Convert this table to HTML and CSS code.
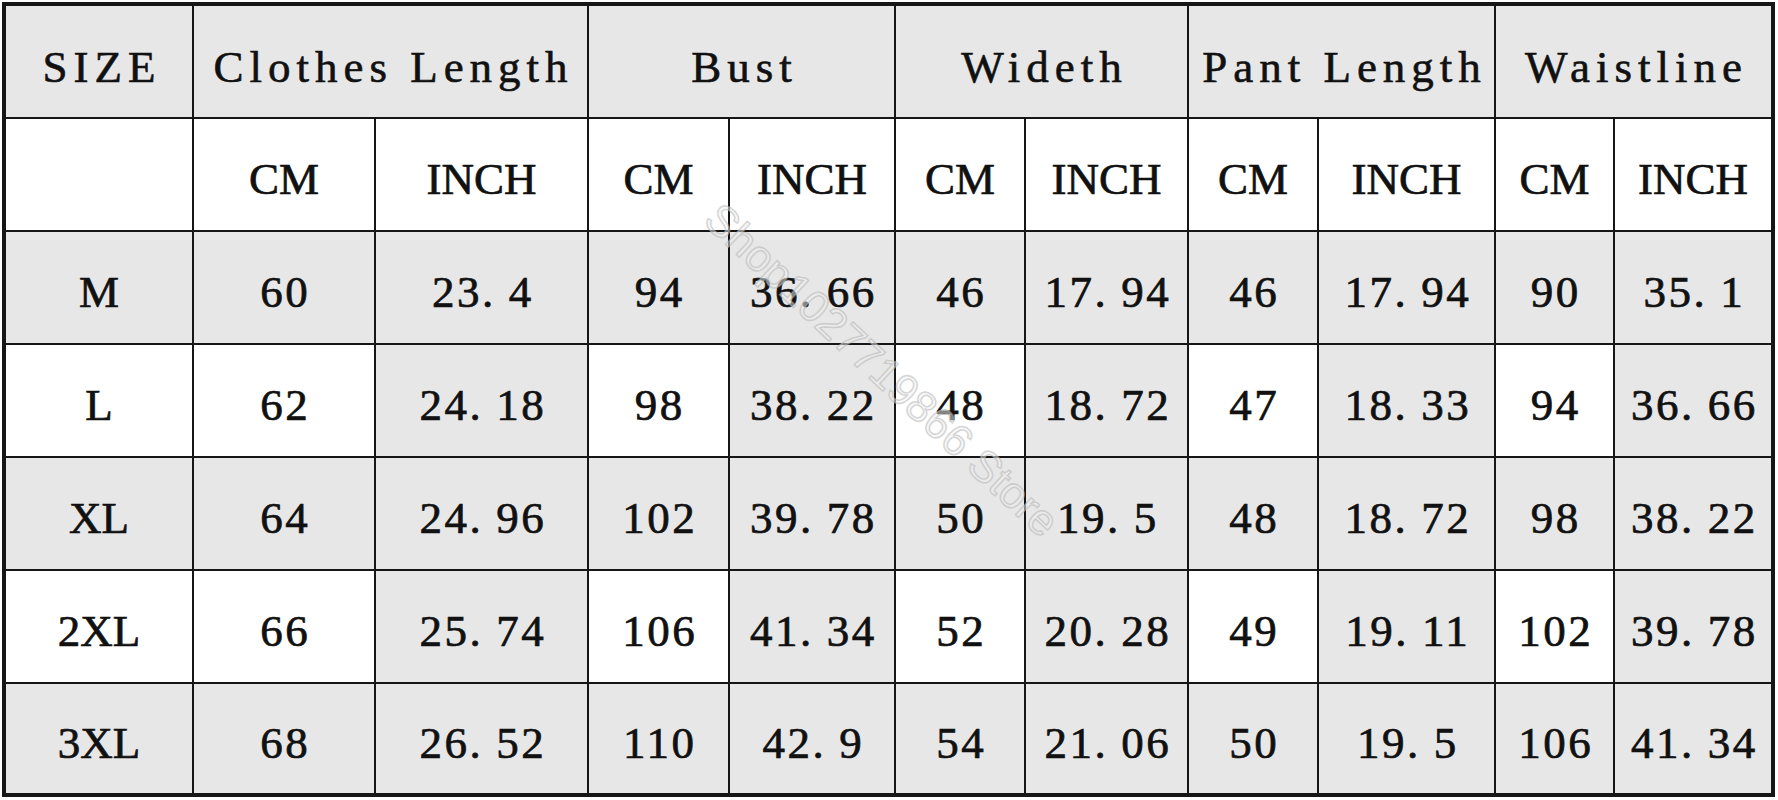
FILE: index.html
```html
<!DOCTYPE html>
<html lang="en">
<head>
<meta charset="utf-8">
<title>Size Chart</title>
<link rel="stylesheet" href="styles.css">
</head>
<body>
<div class="chart">
  <div class="grid">
    <div class="cell gray head">SIZE</div>
    <div class="cell gray head span2">Clothes Length</div>
    <div class="cell gray head span2">Bust</div>
    <div class="cell gray head span2">Wideth</div>
    <div class="cell gray head span2">Pant Length</div>
    <div class="cell gray head span2">Waistline</div>

    <div class="cell"></div>
    <div class="cell unit">CM</div><div class="cell unit">INCH</div>
    <div class="cell unit">CM</div><div class="cell unit">INCH</div>
    <div class="cell unit">CM</div><div class="cell unit">INCH</div>
    <div class="cell unit">CM</div><div class="cell unit">INCH</div>
    <div class="cell unit">CM</div><div class="cell unit">INCH</div>

    <div class="cell gray size">M</div>
    <div class="cell gray num">60</div><div class="cell gray num">23.<span class="frac">4</span></div>
    <div class="cell gray num">94</div><div class="cell gray num">36.<span class="frac">66</span></div>
    <div class="cell gray num">46</div><div class="cell gray num">17.<span class="frac">94</span></div>
    <div class="cell gray num">46</div><div class="cell gray num">17.<span class="frac">94</span></div>
    <div class="cell gray num">90</div><div class="cell gray num">35.<span class="frac">1</span></div>

    <div class="cell size">L</div>
    <div class="cell num">62</div><div class="cell gray num">24.<span class="frac">18</span></div>
    <div class="cell num">98</div><div class="cell gray num">38.<span class="frac">22</span></div>
    <div class="cell num">48</div><div class="cell gray num">18.<span class="frac">72</span></div>
    <div class="cell num">47</div><div class="cell gray num">18.<span class="frac">33</span></div>
    <div class="cell num">94</div><div class="cell gray num">36.<span class="frac">66</span></div>

    <div class="cell gray size">XL</div>
    <div class="cell gray num">64</div><div class="cell gray num">24.<span class="frac">96</span></div>
    <div class="cell gray num">102</div><div class="cell gray num">39.<span class="frac">78</span></div>
    <div class="cell gray num">50</div><div class="cell gray num">19.<span class="frac">5</span></div>
    <div class="cell gray num">48</div><div class="cell gray num">18.<span class="frac">72</span></div>
    <div class="cell gray num">98</div><div class="cell gray num">38.<span class="frac">22</span></div>

    <div class="cell size">2XL</div>
    <div class="cell num">66</div><div class="cell gray num">25.<span class="frac">74</span></div>
    <div class="cell num">106</div><div class="cell gray num">41.<span class="frac">34</span></div>
    <div class="cell num">52</div><div class="cell gray num">20.<span class="frac">28</span></div>
    <div class="cell num">49</div><div class="cell gray num">19.<span class="frac">11</span></div>
    <div class="cell num">102</div><div class="cell gray num">39.<span class="frac">78</span></div>

    <div class="cell gray size">3XL</div>
    <div class="cell gray num">68</div><div class="cell gray num">26.<span class="frac">52</span></div>
    <div class="cell gray num">110</div><div class="cell gray num">42.<span class="frac">9</span></div>
    <div class="cell gray num">54</div><div class="cell gray num">21.<span class="frac">06</span></div>
    <div class="cell gray num">50</div><div class="cell gray num">19.<span class="frac">5</span></div>
    <div class="cell gray num">106</div><div class="cell gray num">41.<span class="frac">34</span></div>
  </div>
  <div class="watermark">Shop1027719866 Store</div>
</div>
</body>
</html>
```
FILE: styles.css
```css
html, body {
  margin: 0;
  padding: 0;
  background: #ffffff;
}

.chart {
  position: relative;
  width: 1773px;
  margin: 2px 0 0 2px;
}

.grid {
  display: grid;
  grid-template-columns: 186px 180px 211px 139px 164px 128px 161px 128px 175px 117px 156px;
  grid-template-rows: 111px 111px 111px 111px 111px 111px 109px;
  gap: 2px;
  padding: 4px;
  background: #161616;
}

.cell {
  display: flex;
  align-items: center;
  justify-content: center;
  padding-top: 8px;
  background: #ffffff;
  color: #111111;
  font-family: "Liberation Serif", "Times New Roman", serif;
  font-size: 45px;
  -webkit-text-stroke: 0.7px #111111;
  white-space: nowrap;
  box-sizing: border-box;
}

.gray {
  background: #e7e7e7;
}

.span2 {
  grid-column: span 2;
}

.head {
  padding-top: 10px;
  font-size: 45px;
  letter-spacing: 6px;
  padding-left: 6px;
  -webkit-text-stroke: 0.6px #111111;
}

.unit {
  letter-spacing: 0;
}

.size {
  letter-spacing: 0;
}

.num {
  letter-spacing: 2.5px;
  padding-left: 2.5px;
}

.frac {
  margin-left: 13px;
}

.watermark {
  position: absolute;
  left: 880px;
  top: 368px;
  transform: translate(-50%, -50%) rotate(43deg);
  font-family: "Liberation Sans", Arial, sans-serif;
  font-size: 44px;
  color: rgba(240, 240, 240, 0.5);
  -webkit-text-stroke: 1.5px rgba(175, 175, 175, 0.5);
  white-space: nowrap;
  pointer-events: none;
}
```
